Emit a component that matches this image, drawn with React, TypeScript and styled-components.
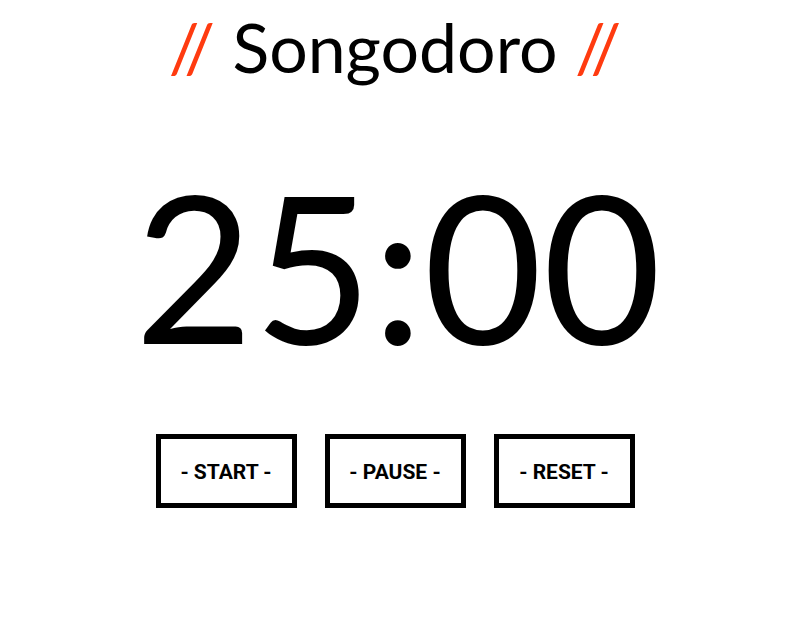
import React from "react";
import styled, { createGlobalStyle } from "styled-components";

const Global = createGlobalStyle`
  html, body { margin: 0; padding: 0; background: #fff; }
  body { font-family: Lato, sans-serif; color: #000; }
`;

const Page = styled.main`
  display: flex;
  flex-direction: column;
  align-items: center;
  padding-top: 7px;
`;

const Title = styled.h1`
  margin: 0;
  margin-right: 6px;
  font-family: Lato, sans-serif;
  font-weight: 400;
  font-size: 68px;
  line-height: 80px;
`;

const Slash = styled.span`
  color: #ff3b10;
`;

const Timer = styled.div`
  margin-top: 58px;
  font-family: Lato, sans-serif;
  font-size: 205px;
  line-height: 240px;
`;

const Controls = styled.div`
  display: flex;
  gap: 28px;
  margin-top: 49px;
  margin-right: 6px;
`;

const Button = styled.button`
  box-sizing: border-box;
  width: 141px;
  height: 74px;
  border: 5px solid #000;
  background: #fff;
  font-family: Roboto, sans-serif;
  font-weight: 700;
  font-size: 21px;
  color: #000;
  padding: 2px 0 0;
  cursor: pointer;
`;

export default function App() {
  return (
    <>
      <Global />
      <Page>
        <Title>
          <Slash>//</Slash> Songodoro <Slash>//</Slash>
        </Title>
        <Timer>25:00</Timer>
        <Controls>
          <Button>- START -</Button>
          <Button>- PAUSE -</Button>
          <Button>- RESET -</Button>
        </Controls>
      </Page>
    </>
  );
}
